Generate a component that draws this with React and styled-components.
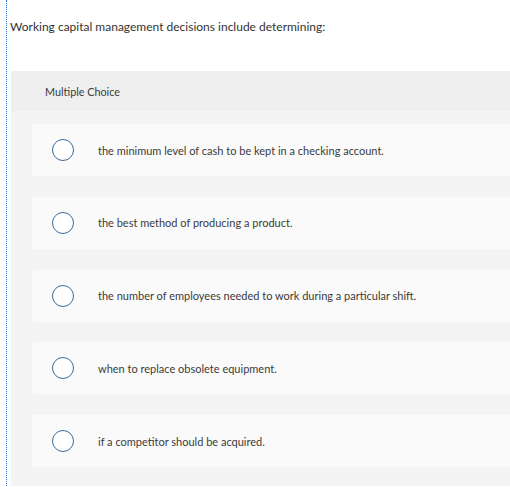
import React from 'react'
import styled, { createGlobalStyle } from 'styled-components'

const GlobalStyle = createGlobalStyle`
  html, body {
    margin: 0;
    padding: 0;
    background: #ffffff;
  }
  body {
    font-family: Lato, "Open Sans", "Liberation Sans", sans-serif;
    color: #333333;
  }
`

const Page = styled.div`
  margin-left: 6px;
  border-left: 1px dotted #1f6fd0;
  height: 486px;
  box-sizing: border-box;
  overflow: hidden;
`

const Question = styled.div`
  height: 71px;
  padding: 20px 0 0 3px;
  box-sizing: border-box;
  font-size: 12px;
  line-height: 14px;
  color: #333333;
`

const Panel = styled.div`
  margin-left: 4px;
  background: #f4f4f4;
  padding-bottom: 19px;
`

const PanelHeader = styled.div`
  height: 40px;
  display: flex;
  align-items: center;
  padding-left: 34px;
  background: #efefef;
  font-size: 10.8px;
  color: #3a3a3a;
`

const Options = styled.div`
  display: flex;
  flex-direction: column;
  gap: 20.75px;
  padding: 13px 0 0 21px;
`

const Option = styled.label`
  height: 52px;
  display: flex;
  align-items: center;
  background: #fafafa;
  border-radius: 3px 0 0 3px;
  padding-left: 20px;
  cursor: pointer;
`

const Radio = styled.span`
  width: 22px;
  height: 22px;
  box-sizing: border-box;
  border: 1.5px solid #3c6a9c;
  border-radius: 50%;
  background: #ffffff;
  flex-shrink: 0;
`

const OptionText = styled.span`
  margin-left: 24px;
  font-size: 11px;
  color: #3a3a3a;
`

const choices = [
  'the minimum level of cash to be kept in a checking account.',
  'the best method of producing a product.',
  'the number of employees needed to work during a particular shift.',
  'when to replace obsolete equipment.',
  'if a competitor should be acquired.',
]

export default function App() {
  return (
    <>
      <GlobalStyle />
      <Page>
        <Question>Working capital management decisions include determining:</Question>
        <Panel>
          <PanelHeader>Multiple Choice</PanelHeader>
          <Options>
            {choices.map(c => (
              <Option key={c}>
                <Radio />
                <OptionText>{c}</OptionText>
              </Option>
            ))}
          </Options>
        </Panel>
      </Page>
    </>
  )
}
